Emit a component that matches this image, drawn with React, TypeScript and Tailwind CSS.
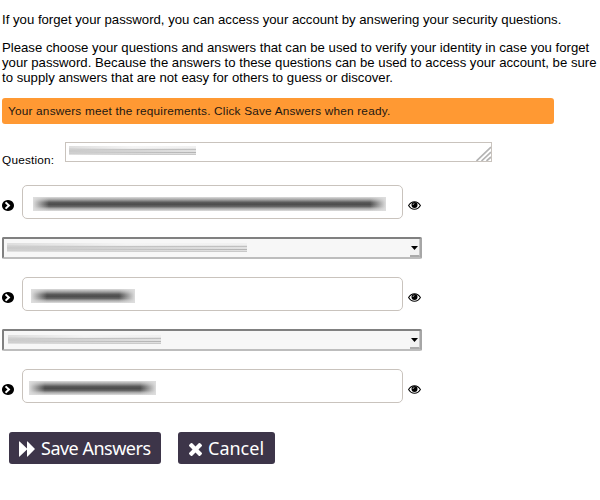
import React from "react";

function ChevronCircle() {
  return (
    <svg className="mt-[7px] h-[11px] w-[12px] shrink-0" viewBox="128 128 1536 1536" preserveAspectRatio="none" fill="#000">
      <path d="M717 1395l454-454q19-19 19-45t-19-45l-454-454q-19-19-45-19t-45 19l-102 102q-19 19-19 45t19 45l307 307-307 307q-19 19-19 45t19 45l102 102q19 19 45 19t45-19zM1664 896q0 209-103 385.500t-279.500 279.500-385.500 103-385.500-103-279.500-279.500-103-385.500 103-385.500 279.500-279.500 385.500-103 385.500 103 279.500 279.500 103 385.500z" />
    </svg>
  );
}

function Eye() {
  return (
    <svg className="mt-[7px] ml-[5px] h-[9px] w-[13px] shrink-0" viewBox="0 0 13 9" fill="none" stroke="#000">
      <path d="M.6 4.500C2.200 1.800 4.200.7 6.500.7s4.300 1.100 5.900 3.800C10.800 7.200 8.800 8.300 6.500 8.300S2.200 7.200.6 4.500Z" strokeWidth="1.1" />
      <circle cx="6.500" cy="4.100" r="3" fill="#000" stroke="none" />
      <path d="M5 4Q5 2.600 6.400 2.500" stroke="#fff" strokeWidth=".6" />
    </svg>
  );
}

function Redacted({ place }: { place: string }) {
  return (
    <div className={`flex justify-between bg-[linear-gradient(to_bottom,#dcdcdc,#a0a0a0_20%,#5c5c5c_38%,#4c4c4c_52%,#666_68%,#a8a8a8_82%,#dedede)] ${place}`}>
      <div className="h-full w-[16px] bg-linear-to-r from-[#dedede] to-[#dedede]/0" />
      <div className="h-full w-[16px] bg-linear-to-l from-[#dedede] to-[#dedede]/0" />
    </div>
  );
}

function Smudge({ place }: { place: string }) {
  return (
    <div className={`flex flex-col ${place}`}>
      <div className="h-[2px] bg-linear-to-r from-[#dedede] via-[#f4f4f4] to-[#f0f0f0]" />
      <div className="h-px bg-linear-to-r from-[#d4d4d4] via-[#eeeeee] to-[#e4e4e4]" />
      <div className="h-px bg-linear-to-r from-[#d0d0d0] via-[#c4c4c4] to-[#c0c0c0]" />
      <div className="h-[2px] bg-linear-to-r from-[#cacaca] via-[#d4d4d4] to-[#e2e2e2]" />
      <div className="h-px bg-linear-to-r from-[#d0d0d0] via-[#c4c4c4] to-[#b4b4b4]" />
      <div className="h-px bg-linear-to-r from-[#cecece] via-[#d8d8d8] to-[#e0e0e0]" />
      <div className="h-px bg-linear-to-r from-[#e0e0e0] via-[#d0d0d0] to-[#c8c8c8]" />
    </div>
  );
}

function AnswerRow({ place }: { place: string }) {
  return (
    <div className="ml-[2px] flex h-[34px] items-center">
      <ChevronCircle />
      <div className="ml-2 flex h-[34px] w-[381px] shrink-0 items-start rounded-[5px] border border-[#c9c3bd] bg-white">
        <Redacted place={place} />
      </div>
      <Eye />
    </div>
  );
}

function SelectBox({ place }: { place: string }) {
  return (
    <div className="ml-[2px] flex h-[22px] w-[420px] items-start justify-between rounded-[2px] border-2 border-t-[#808080] border-r-[#a6a6a6] border-b-[#bdbdbd] border-l-[#808080] bg-[#f7f7f7]">
      <Smudge place={place} />
      <div className="flex h-[18px] w-[10px] items-center justify-center border-r border-b-2 border-r-[#c4c4c4] border-b-[#aaa] bg-[#f2f2f2]">
        <svg className="mt-[2px] h-[4px] w-[7px]" viewBox="0 0 7 4"><path d="M0 0h7L3.500 4z" /></svg>
      </div>
    </div>
  );
}

export default function App() {
  return (
    <main className="flex h-[500px] w-[600px] flex-col overflow-hidden bg-white font-['Liberation_Sans',Arial,sans-serif] text-[13.18px] leading-[15px] text-black">
      <p className="mt-[12px] ml-[2px] whitespace-nowrap">If you forget your password, you can access your account by answering your security questions.</p>
      <div className="mt-[13px] ml-[2px] whitespace-nowrap">
        <p>Please choose your questions and answers that can be used to verify your identity in case you forget</p>
        <p>your password. Because the answers to these questions can be used to access your account, be sure</p>
        <p>to supply answers that are not easy for others to guess or discover.</p>
      </div>
      <div className="mt-[13px] ml-[2px] flex h-[26px] w-[552px] items-center rounded-[3px] bg-[#ff9933] pl-[6px] text-[11.8px] tracking-[0.2px] text-[#1c1712]">
        <span>Your answers meet the requirements. Click Save Answers when ready.</span>
      </div>
      <div className="mt-[18px] ml-[2px] flex h-[25px]">
        <label className="mt-[11px] w-[63px] text-[11.8px] tracking-[0.2px]">Question:</label>
        <div className="flex h-[20px] w-[427px] items-start justify-between border border-[#c9c3bd]">
          <Smudge place="mt-[3px] ml-[3px] w-[127px]" />
          <svg className="mt-[3px] h-[15px] w-[15px]" viewBox="0 0 15 15" stroke="#b4b4b4" strokeWidth="1.7">
            <path d="M.5 15L15 1M5.500 15L15 6M10.500 15L15 11" />
          </svg>
        </div>
      </div>
      <div className="mt-[18px]"><AnswerRow place="mt-[11px] ml-[10px] h-[14px] w-[353px]" /></div>
      <div className="mt-[18px]"><SelectBox place="mt-[4px] ml-[3px] w-[240px]" /></div>
      <div className="mt-[18px]"><AnswerRow place="mt-[11px] ml-[8px] h-[14px] w-[104px]" /></div>
      <div className="mt-[18px]"><SelectBox place="mt-[4px] ml-[4px] w-[153px]" /></div>
      <div className="mt-[18px]"><AnswerRow place="mt-[11px] ml-[6px] h-[14px] w-[127px]" /></div>
      <div className="mt-[29px] ml-[9px] flex gap-[17px] font-['Noto_Sans','Open_Sans',sans-serif] text-[18px] leading-[32px] text-white">
        <button className="flex h-[32px] w-[152px] items-center rounded-[3px] bg-[#3d3549] pl-[10px] whitespace-nowrap">
          <svg className="mt-px mr-[6px] h-[16px] w-[16px] shrink-0" viewBox="0 0 16 16" fill="#fff"><path d="M0 .7Q0 0 .6.5L8 7.500V.7Q8 0 8.600.5L16 8 8.600 15.500Q8 16 8 15.300V8.500L.6 15.500Q0 16 0 15.300Z" /></svg>
          <span className="tracking-[-0.5px]">Save Answers</span>
        </button>
        <button className="flex h-[32px] w-[97px] items-center rounded-[3px] bg-[#3d3549] pl-[11px] whitespace-nowrap">
          <svg className="mt-[2px] mr-[6px] h-[13px] w-[13px] shrink-0" viewBox="110 366 1188 1188" fill="#fff"><path d="M1298 1322q0 40-28 68l-136 136q-28 28-68 28t-68-28l-294-294-294 294q-28 28-68 28t-68-28l-136-136q-28-28-28-68t28-68l294-294-294-294q-28-28-28-68t28-68l136-136q28-28 68-28t68 28l294 294 294-294q28-28 68-28t68 28l136 136q28 28 28 68t-28 68l-294 294 294 294q28 28 28 68z" /></svg>
          <span>Cancel</span>
        </button>
      </div>
    </main>
  );
}
